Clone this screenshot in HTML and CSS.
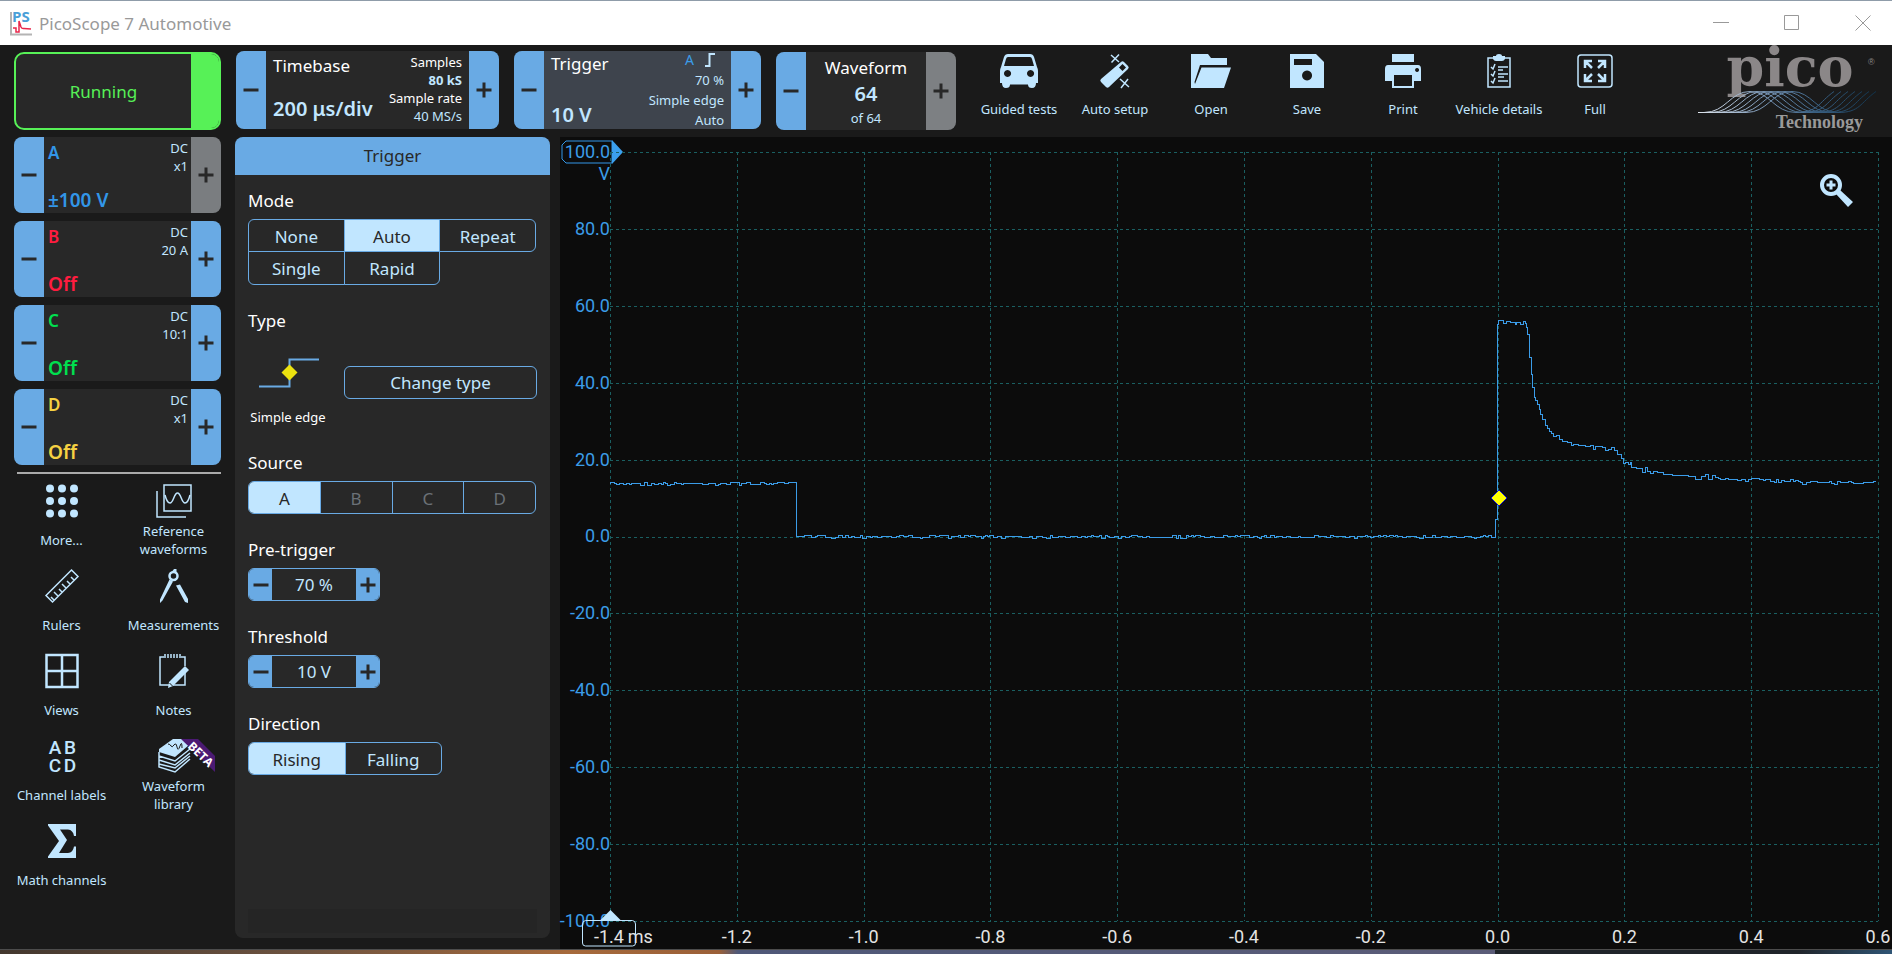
FILE: index.html
```html
<!DOCTYPE html>
<html lang="en">
<head>
<meta charset="utf-8">
<title>PicoScope 7 Automotive</title>
<link rel="stylesheet" href="styles.css">
</head>
<body>
<svg class="defs" aria-hidden="true">
  <symbol id="minus" viewBox="0 0 16 16"><path d="M0.500 6.500h15v3h-15z"/></symbol>
  <symbol id="plus" viewBox="0 0 16 16"><path d="M6.500 0.500h3v6h6v3h-6v6h-3v-6h-6v-3h6z"/></symbol>
</svg>
<div class="window">
  <header class="titlebar">
    <svg class="app-icon" viewBox="0 0 24 26" aria-hidden="true">
      <path d="M1 2v22.500h21" fill="none" stroke="#b4b4b4" stroke-width="2"/>
      <text class="app-icon-text" x="2" y="12">PS</text>
      <path d="M3 18h3v4h3v-11l2 6q1 2 3 1.500l7 .5" fill="none" stroke="#e8274b" stroke-width="1.500"/>
    </svg>
    <h1 class="title">PicoScope 7 Automotive</h1>
    <div class="window-buttons">
      <button aria-label="Minimize"><svg viewBox="0 0 16 16"><path d="M0 7.500h16"/></svg></button>
      <button aria-label="Maximize"><svg viewBox="0 0 16 16"><path d="M.5 .5h14v14h-14z"/></svg></button>
      <button aria-label="Close"><svg viewBox="0 0 16 16"><path d="M.5 .5l15 15M15.500 .5l-15 15"/></svg></button>
    </div>
  </header>

  <div class="app">
    <nav class="topbar">
      <button class="run"><span class="run-text">Running</span><span class="run-light"></span></button>
      <section class="card timebase">
        <button class="step" aria-label="Decrease timebase"><svg><use href="#minus"/></svg></button>
        <div class="card-body split">
          <div class="col"><span class="name">Timebase</span><strong class="value">200 μs/div</strong></div>
          <div class="col info"><span class="white">Samples</span><b>80 kS</b><span class="white">Sample rate</span><span>40 MS/s</span></div>
        </div>
        <button class="step" aria-label="Increase timebase"><svg><use href="#plus"/></svg></button>
      </section>
      <section class="card trigger active">
        <button class="step" aria-label="Decrease trigger level"><svg><use href="#minus"/></svg></button>
        <div class="card-body split">
          <div class="col"><span class="name">Trigger</span><strong class="value">10 V</strong></div>
          <div class="col info">
            <span class="edge"><span class="blue">A</span><svg class="edge-icon" viewBox="0 0 12 14"><path d="M1 13h4.500V1H11"/></svg></span>
            <span>70 %</span><span>Simple edge</span><span>Auto</span>
          </div>
        </div>
        <button class="step" aria-label="Increase trigger level"><svg><use href="#plus"/></svg></button>
      </section>
      <section class="card waveform">
        <button class="step" aria-label="Previous waveform"><svg><use href="#minus"/></svg></button>
        <div class="card-body center"><span class="name">Waveform</span><strong class="value">64</strong><span class="small">of 64</span></div>
        <button class="step" disabled aria-label="Next waveform"><svg><use href="#plus"/></svg></button>
      </section>
      <div class="actions">
        <button class="tool"><svg viewBox="0 0 40 34"><path fill-rule="evenodd" d="M9 0h22q3 0 4 3l3 10q1 2 1 4v12h-2q0 5-4 5t-4-3.500H11q0 3.500-4 3.500t-4-5H1V17q0-2 1-4L5 3q1-3 4-3zM9 3q-1.500 0-2 2L5 12h30l-2-7q-.5-2-2-2zM8.500 16a3.500 3.500 0 1 0 .1 0zM31.500 16a3.500 3.500 0 1 0 .1 0z"/></svg><span>Guided tests</span></button>
        <button class="tool"><svg viewBox="0 0 40 34"><path fill-rule="evenodd" d="M26 8q1.500-1.500 3 0l4 4q1.500 1.500 0 3L14 33q-1.500 1.500-3 0l-5-5q-1.500-1.500 0-3zM27.500 10l-3.500 3.500 3.500 3.500 3.500-3.500z"/><path class="line" d="M16 1l8 7M24 .5l-7.500 8M25 25l9 8M33 25l-7 9" /></svg><span>Auto setup</span></button>
        <button class="tool"><svg viewBox="0 0 40 34"><path d="M0 0h17l3 4h16v7H9L3.500 28 4 30 10.500 13.500H40L33 34H0z"/></svg><span>Open</span></button>
        <button class="tool"><svg viewBox="0 0 40 34"><path fill-rule="evenodd" d="M3 0h26l8 8v26H3zM7 5v6h18V5zM20 16.500a5 5 0 1 0 .1 0z"/></svg><span>Save</span></button>
        <button class="tool"><svg viewBox="0 0 40 34"><path fill-rule="evenodd" d="M9 0h22v8H9zM5 11h30q3 0 3 4v12h-7v7H9v-7H2V15q0-4 3-4zM11 21v11h18V21zM34 14a2 2 0 1 0 .1 0z"/></svg><span>Print</span></button>
        <button class="tool"><svg viewBox="0 0 40 34"><path d="M14 2h3q0-2 3-2t3 2h3v3q-1 2-3 2h-6q-2 0-3-2z"/><path class="line" d="M14 4H9v29h22V4h-5M19 13h10M19 16h5M19 20h10M19 23h6M19 27h10M12 13l2 2 2-5M12 20l2 2 2-5M12 27l2 2 2-5"/></svg><span>Vehicle details</span></button>
        <button class="tool"><svg viewBox="0 0 40 34"><rect class="line" x="3" y="1" width="34" height="32" rx="3"/><path class="thick" d="M10 14V7h7M10 7l7 7M30 14V7h-7M30 7l-7 7M10 20v7h7M10 27l7-7M30 20v7h-7M30 27l-7-7"/></svg><span>Full</span></button>
      </div>
      <svg class="logo" viewBox="0 0 180 80" role="img" aria-label="Pico Technology">
        <defs><linearGradient id="wave-fade" gradientUnits="userSpaceOnUse" x1="0" y1="0" x2="180" y2="0"><stop offset="0" stop-color="#dfe6ee"/><stop offset=".35" stop-color="#7d99b8"/><stop offset=".65" stop-color="#3c6488"/><stop offset="1" stop-color="#0e3048"/></linearGradient></defs>
        <text class="logo-name" x="92" y="35">pico</text>
        <text class="logo-mark" x="170" y="14">®</text>
        <g class="waves" id="waves"></g>
        <text class="logo-sub" x="165" y="77">Technology</text>
      </svg>
    </nav>

    <div class="work">
      <aside class="sidebar">
        <section class="card channel ch-a">
          <button class="step" aria-label="Decrease A range"><svg><use href="#minus"/></svg></button>
          <div class="card-body split"><div class="col"><b>A</b><strong>±100 V</strong></div><div class="meta"><span>DC</span><span>x1</span></div></div>
          <button class="step" disabled aria-label="Increase A range"><svg><use href="#plus"/></svg></button>
        </section>
        <section class="card channel ch-b">
          <button class="step" aria-label="Decrease B range"><svg><use href="#minus"/></svg></button>
          <div class="card-body split"><div class="col"><b>B</b><strong>Off</strong></div><div class="meta"><span>DC</span><span>20 A</span></div></div>
          <button class="step" aria-label="Increase B range"><svg><use href="#plus"/></svg></button>
        </section>
        <section class="card channel ch-c">
          <button class="step" aria-label="Decrease C range"><svg><use href="#minus"/></svg></button>
          <div class="card-body split"><div class="col"><b>C</b><strong>Off</strong></div><div class="meta"><span>DC</span><span>10:1</span></div></div>
          <button class="step" aria-label="Increase C range"><svg><use href="#plus"/></svg></button>
        </section>
        <section class="card channel ch-d">
          <button class="step" aria-label="Decrease D range"><svg><use href="#minus"/></svg></button>
          <div class="card-body split"><div class="col"><b>D</b><strong>Off</strong></div><div class="meta"><span>DC</span><span>x1</span></div></div>
          <button class="step" aria-label="Increase D range"><svg><use href="#plus"/></svg></button>
        </section>
        <hr class="divider">
        <div class="tools">
          <button class="tool"><svg viewBox="0 0 40 34"><g><circle cx="8" cy="4.500" r="4"/><circle cx="20" cy="4.500" r="4"/><circle cx="32" cy="4.500" r="4"/><circle cx="8" cy="17" r="4"/><circle cx="20" cy="17" r="4"/><circle cx="32" cy="17" r="4"/><circle cx="8" cy="29.500" r="4"/><circle cx="20" cy="29.500" r="4"/><circle cx="32" cy="29.500" r="4"/></g></svg><span>More...</span></button>
          <button class="tool"><svg viewBox="0 0 40 34"><path class="line" d="M10 1h27v26H10zM3 7v26h29"/><path class="line" d="M11 11q2 8 5 8c3.500 0 4-10 7.500-10s4 10 7.500 10q3 0 5-8"/></svg><span>Reference waveforms</span></button>
          <button class="tool"><svg viewBox="0 0 40 34"><path class="line" d="M29.500 1L36 7.500 10.500 33 4 26.500zM12 31l-3-3M16 27l-4-4M20 23l-3-3M24 19l-4-4M28 15l-3-3M32 11l-3-3"/></svg><span>Rulers</span></button>
          <button class="tool"><svg viewBox="0 0 40 34"><path d="M18.500 2l1.500-2h2.500v3l-1 1zM15.500 10.500L6 30.500V34l2.500-2.500 10.500-19zM22 16.500L31 33l3 1v-4l-8-14.500z"/><circle class="thick" cx="19.500" cy="7" r="4"/></svg><span>Measurements</span></button>
          <button class="tool"><svg viewBox="0 0 40 34"><path class="thick" d="M4.500 1h31v32h-31zM20 1v32M4.500 17h31"/></svg><span>Views</span></button>
          <button class="tool"><svg viewBox="0 0 40 34"><path class="line" d="M10 3H6v28h25V18M31 12V3h-4M11 0v4M14 0v4M17 0v4M20 0v4M23 0v4M26 0v4"/><path d="M31 12l4 4-16 16-5 2 1-6z"/><path d="M15.500 29l3 3" stroke="#1a1a1a"/></svg><span>Notes</span></button>
          <button class="tool"><svg class="letters" viewBox="0 0 40 34"><text x="13" y="15">A</text><text x="28" y="15">B</text><text x="13" y="33">C</text><text x="28" y="33">D</text></svg><span>Channel labels</span></button>
          <button class="tool">
            <span class="badge-icon"><svg viewBox="0 0 40 34"><path d="M19 0h12l4 6-14 12L5 13v-3z"/><path class="line" d="M5 13v15l16 5 15-13M5 17l16 5 15-12M5 21l16 5 15-12M5 25l16 4 15-12"/><path d="M14 5q2 0 3 2t3-1 3 2 3-1 2 2" fill="none" stroke="#1a1a1a"/></svg>
            <svg class="beta" viewBox="0 0 34 34"><path d="M0 0h17l17 17v16z" fill="#4b1a73"/><text transform="translate(19.500 15.500) rotate(44)" y="4">BETA</text></svg></span>
            <span>Waveform library</span></button>
          <button class="tool"><svg viewBox="0 0 40 34"><path d="M6 0h28v12h-2q-1-6-6-6.500H18L25 16 17 29h9q5-.5 6-6.500h2V34H6v-1.500L17 17 6 1.500z"/></svg><span>Math channels</span></button>
        </div>
      </aside>

      <section class="panel">
        <h2 class="panel-head">Trigger</h2>
        <div class="panel-body">
          <fieldset class="field">
            <legend>Mode</legend>
            <div class="seg mode">
              <label><input type="radio" name="mode"><span>None</span></label>
              <label><input type="radio" name="mode" checked><span>Auto</span></label>
              <label><input type="radio" name="mode"><span>Repeat</span></label>
              <label><input type="radio" name="mode"><span>Single</span></label>
              <label><input type="radio" name="mode"><span>Rapid</span></label>
            </div>
          </fieldset>
          <fieldset class="field type-field">
            <legend>Type</legend>
            <div class="type">
              <figure class="type-figure">
                <svg viewBox="0 0 60 32"><path d="M0 29.500h30.500V2.500H60" fill="none" stroke="#69aae4" stroke-width="2"/><path d="M30.500 7.500l8 8-8 8-8-8z" fill="#ece20f"/></svg>
                <figcaption>Simple edge</figcaption>
              </figure>
              <button class="outline">Change type</button>
            </div>
          </fieldset>
          <fieldset class="field">
            <legend>Source</legend>
            <div class="seg four">
              <label><input type="radio" name="src" checked><span>A</span></label>
              <label><input type="radio" name="src" disabled><span>B</span></label>
              <label><input type="radio" name="src" disabled><span>C</span></label>
              <label><input type="radio" name="src" disabled><span>D</span></label>
            </div>
          </fieldset>
          <div class="field">
            <label class="field-name" for="pre">Pre-trigger</label>
            <div class="spin"><button aria-label="Less"><svg><use href="#minus"/></svg></button><input id="pre" value="70 %"><button aria-label="More"><svg><use href="#plus"/></svg></button></div>
          </div>
          <div class="field">
            <label class="field-name" for="thr">Threshold</label>
            <div class="spin"><button aria-label="Less"><svg><use href="#minus"/></svg></button><input id="thr" value="10 V"><button aria-label="More"><svg><use href="#plus"/></svg></button></div>
          </div>
          <fieldset class="field">
            <legend>Direction</legend>
            <div class="seg two">
              <label><input type="radio" name="dir" checked><span>Rising</span></label>
              <label><input type="radio" name="dir"><span>Falling</span></label>
            </div>
          </fieldset>
          <div class="panel-foot"></div>
        </div>
      </section>

      <main class="chart">
        <div class="y-axis">
          <span class="tick">100.0</span><span class="tick">80.0</span><span class="tick">60.0</span><span class="tick">40.0</span><span class="tick">20.0</span><span class="tick">0.0</span><span class="tick">-20.0</span><span class="tick">-40.0</span><span class="tick">-60.0</span><span class="tick">-80.0</span><span class="tick">-100.0</span>
          <div class="y-handle"><svg viewBox="0 0 62 24"><path d="M51 1H5L1 5v14l4 4h46z" fill="none" stroke="#3296e8"/><path d="M51 0l11 12-11 12z" fill="#3ba0ef"/></svg><span>V</span></div>
        </div>
        <div class="plot">
          <svg class="plot-svg" viewBox="0 0 1268 769" preserveAspectRatio="none" aria-label="Channel A voltage over time">
            <g class="grid" id="grid"></g>
            <path class="trace" id="trace"/>
          </svg>
          <svg class="marker" viewBox="0 0 18 18"><path d="M9 1l8 8-8 8-8-8z" fill="#ff0" stroke="#0a0ad0"/></svg>
          <button class="zoom" aria-label="Zoom"><svg viewBox="0 0 34 34"><circle cx="11" cy="11" r="9" fill="none" stroke="#c1e6ff" stroke-width="4"/><path d="M9.500 6.500h3v3h3v3h-3v3h-3v-3h-3v-3h3zM16 20l4-4 13 12-5 5z"/></svg></button>
        </div>
        <div class="x-axis">
          <span class="tick first">-1.4&#8201;ms</span><span class="tick">-1.2</span><span class="tick">-1.0</span><span class="tick">-0.8</span><span class="tick">-0.6</span><span class="tick">-0.4</span><span class="tick">-0.2</span><span class="tick">0.0</span><span class="tick">0.2</span><span class="tick">0.4</span><span class="tick">0.6</span>
          <svg class="x-handle" viewBox="0 0 54 37"><path d="M.5 14q0-3 3-3.500h47q3 .5 3 3.500v19q0 3-3 3h-47q-3 0-3-3z" fill="none" stroke="#c1e6ff"/><path d="M28.500 0l11 11h-22z" fill="#c1e6ff"/></svg>
        </div>
      </main>
    </div>
  </div>
  <div class="desktop"></div>
</div>
<script src="script.js"></script>
</body>
</html>
```

FILE: styles.css
```css
* { box-sizing: border-box; }
:root {
  --blue: #69aae4;
  --pale: #c1e6ff;
  --dark: #1a1a1a;
  --card: #282828;
  --trace: #3b9ce8;
}
body { margin: 0; font-family: "Noto Sans", "Open Sans", sans-serif; font-size: 17px; color: var(--pale); }
button, input { font: inherit; color: inherit; border: 0; padding: 0; background: none; }
.defs { display: block; width: 0; height: 0; }
.window { display: flex; flex-direction: column; height: 100vh; border-top: 1px solid #8f9ca9; overflow: hidden; }

.titlebar { display: flex; align-items: center; height: 44px; flex: none; background: #fff; padding-left: 10px; }
.app-icon { width: 24px; height: 26px; overflow: visible; }
.app-icon-text { font: bold 15px "Open Sans", sans-serif; fill: #4a9fd8; }
.title { margin: 0 0 0 5px; font-size: 17px; font-weight: 400; color: #999; }
.window-buttons { display: flex; gap: 13px; margin-left: auto; }
.window-buttons button { width: 58px; height: 44px; display: grid; place-items: center; }
.window-buttons svg { width: 16px; height: 16px; fill: none; stroke: #999; }

.app { flex: 1; min-height: 0; display: flex; flex-direction: column; background: var(--dark); }
.topbar { display: flex; height: 92px; flex: none; padding: 6px 14px 7px; }
.run { display: flex; width: 207px; height: 78px; margin: 1px 15px 0 0; border: 2px solid #57f157; border-radius: 10px; background: var(--card); overflow: hidden; color: #57f157; }
.run-text { flex: 1; align-self: center; }
.run-light { width: 28px; height: 100%; background: #57f157; }

.card { display: flex; border-radius: 8px; overflow: hidden; background: var(--card); }
.card-body { flex: 1; min-width: 0; padding: 0 7px; display: flex; }
.split { justify-content: space-between; }
.col { display: flex; flex-direction: column; justify-content: space-between; white-space: nowrap; }
.step { width: 30px; flex: none; display: grid; place-items: center; background: var(--blue); }
.step:disabled { background: #7d8083; }
.step svg, .spin svg { width: 16px; height: 16px; fill: #282828; }
.name { color: #fff; line-height: 24px; }
.value { font-size: 20px; font-weight: 600; line-height: 28px; }
.timebase, .trigger, .waveform { height: 78px; margin-right: 15px; }
.timebase { width: 263px; }
.trigger { width: 247px; }
.waveform { width: 180px; margin-top: 1px; }
.active { background: #3e444d; }
.timebase .col:first-child { padding: 3px 0 6px; }
.trigger .col:first-child { padding: 1px 0 0; }
.info { align-items: flex-end; font-size: 13px; line-height: 18px; padding: 2px 0 4px; }
.trigger .info { padding: 0; }
.white { color: #fff; }
.blue { color: var(--trace); font-size: 14px; }
.edge { display: flex; gap: 10px; align-items: center; padding-right: 8px; }
.edge-icon { width: 12px; height: 14px; fill: none; stroke: var(--pale); stroke-width: 2; }
.center { flex-direction: column; align-items: center; padding-top: 4px; }
.small { font-size: 13px; line-height: 20px; }

.actions { display: flex; }
.tool { display: flex; flex-direction: column; align-items: center; font-size: 13px; line-height: 18px; }
.tool svg { width: 40px; height: 34px; flex: none; fill: var(--pale); overflow: visible; }
.tool .line, .tool .thick { fill: none; stroke: var(--pale); stroke-width: 1.5; }
.tool .thick { stroke-width: 2.5; }
.actions .tool { width: 96px; padding-top: 3px; gap: 12px; white-space: nowrap; }
.logo { width: 180px; height: 80px; margin-left: auto; overflow: visible; }
.logo-name { font: bold 54px "DejaVu Serif", serif; fill: #8b8788; text-anchor: middle; }
.logo-mark { font: 9px "Liberation Sans", sans-serif; fill: #8b8788; }
.logo-sub { font: bold 18px "Liberation Serif", serif; fill: #999; text-anchor: end; }
.waves { fill: none; stroke: url(#wave-fade); stroke-width: 1; }

.work { flex: 1; min-height: 0; display: flex; }
.sidebar { width: 235px; flex: none; padding-left: 14px; padding-right: 14px; }
.channel { height: 76px; margin-bottom: 8px; }
.channel .card-body { padding: 0 3px 0 4px; }
.channel .col { padding: 4px 0 0; }
.channel b { font-size: 17px; font-weight: 600; line-height: 24px; }
.channel strong { font-size: 19px; font-weight: 600; line-height: 25px; }
.channel .step:disabled { background: #7a7d80; }
.meta { display: flex; flex-direction: column; text-align: right; font-size: 13px; line-height: 18px; padding-top: 2px; }
.ch-a .col { color: #3296e8; }
.ch-b .col { color: #ff1c3f; }
.ch-c .col { color: #00e04f; }
.ch-d .col { color: #f5d142; }
.divider { margin: -1px 0 0 3px; border: 0; height: 2px; background: #aaa; }
.tools { display: grid; grid-template-columns: 111px 111px; grid-auto-rows: 85px; column-gap: 1px; margin: 10px -8px 0 -8px; }
.tools .tool { justify-self: center; width: 100px; }
.tools .tool > span:last-child { display: grid; place-items: center; height: 40px; padding-top: 3px; }
.letters text { font: 500 19px Roboto, sans-serif; text-anchor: middle; }
.badge-icon { position: relative; display: block; height: 34px; }
.tool .beta { position: absolute; left: 27px; top: 0; width: 34px; height: 34px; }
.beta text { font: bold 12px "Open Sans", sans-serif; fill: #fff; text-anchor: middle; }

.panel { width: 315px; flex: none; margin: 0 10px 11px 0; border-radius: 8px; overflow: hidden; background: var(--card); display: flex; flex-direction: column; }
.panel-head { margin: 0; flex: none; background: var(--blue); color: #282828; text-align: center; font-size: 17px; font-weight: 400; line-height: 38px; }
.panel-body { flex: 1; display: flex; flex-direction: column; padding: 14px 13px 5px; }
.field { margin: 0 0 24px; padding: 0; border: 0; min-width: 0; }
.field legend, .field-name { display: block; padding: 0; color: #fff; line-height: 24px; margin-bottom: 6px; }
.seg { display: grid; line-height: 33px; text-align: center; }
.seg label { position: relative; height: 33px; border: 1px solid var(--blue); margin-right: -1px; overflow: hidden; }
.seg input { position: absolute; inset: 0; margin: 0; opacity: 0; }
.seg span { display: block; height: 31px; line-height: 33px; }
.seg input:checked + span { background: var(--pale); color: #282828; }
.seg input:disabled + span { color: #6b7177; }
.mode, .four { width: 287px; }
.mode { grid-template-columns: repeat(3, 1fr); }
.mode label:nth-child(n+4) { margin-top: -1px; height: 34px; }
.four { grid-template-columns: repeat(4, 1fr); }
.two { width: 193px; grid-template-columns: 1fr 1fr; }
.seg label:first-child { border-radius: 6px 0 0 6px; }
.seg label:last-child { border-radius: 0 6px 6px 0; }
.mode label:first-child { border-radius: 6px 0 0 0; }
.mode label:nth-child(3) { border-radius: 0 6px 6px 0; }
.mode label:nth-child(4) { border-radius: 0 0 0 6px; }
.mode label:last-child { border-radius: 0 0 6px 0; }
.type { display: grid; grid-template-columns: 80px 1fr; column-gap: 16px; padding: 12px 0 0; }
.type-figure { margin: 0; text-align: center; font-size: 13px; white-space: nowrap; color: #fff; }
.type-figure svg { display: block; width: 60px; height: 32px; margin: 6px 0 18px 11px; }
.type-figure figcaption { line-height: 20px; }
.outline { height: 33px; border: 1px solid var(--blue); border-radius: 6px; margin-top: 15px; }
.type-field { margin: 0 0 24px; }
.spin { display: flex; width: 132px; height: 33px; border-radius: 6px; overflow: hidden; border: 1px solid var(--blue); }
.spin button { width: 23px; display: grid; place-items: center; background: var(--blue); }
.spin input { flex: 1; min-width: 0; text-align: center; }
.panel-foot { margin-top: auto; height: 24px; background: #252525; }

.chart { flex: 1; min-width: 0; display: grid; grid-template-columns: 50px 1fr 14px; grid-template-rows: 15px 1fr 28px; background: #0c0c0c; font-family: Roboto, sans-serif; font-size: 18px; }
.y-axis { grid-area: 2 / 1; position: relative; display: flex; flex-direction: column; justify-content: space-between; align-items: flex-end; color: var(--trace); white-space: nowrap; }
.y-axis .tick { height: 0; line-height: 0; }
.y-handle { position: absolute; right: -13px; top: -12px; width: 62px; }
.y-handle svg { display: block; width: 62px; height: 24px; }
.y-handle span { display: block; text-align: right; padding-right: 13px; line-height: 20px; }
.plot { grid-area: 2 / 2; position: relative; min-height: 0; }
.plot-svg { display: block; width: 100%; height: 100%; overflow: visible; }
.grid { stroke: #1a5f61; stroke-width: 1; stroke-dasharray: 3 3; shape-rendering: crispEdges; }
.trace { fill: none; stroke: var(--trace); stroke-width: 1; shape-rendering: crispEdges; }
.marker { position: absolute; left: 70%; top: 45%; width: 18px; height: 18px; margin: -9px 0 0 -8px; }
.zoom { position: absolute; right: 24px; top: 22px; width: 34px; height: 34px; }
.zoom svg { width: 34px; height: 34px; fill: var(--pale); }
.x-axis { grid-area: 3 / 2; position: relative; display: flex; justify-content: space-between; color: #e4e4e4; line-height: 31px; white-space: nowrap; }
.x-axis .tick { width: 0; display: flex; justify-content: center; }
.x-axis .first { justify-content: flex-start; margin-left: -16px; margin-right: 16px; }
.x-handle { position: absolute; left: -28px; top: -11px; width: 54px; height: 37px; }

.desktop { height: 5px; flex: none; border-top: 1px solid #4c4c4c; background: linear-gradient(90deg, #43372e 0, #6d5340 16%, #a66a3c 30%, #9b6038 38%, #4f5878 39%, #5b5c78 79%, #20242a 79%, #20242a 95%, #2f5575 100%); }
```

FILE: script.js
```js
const NS = "http://www.w3.org/2000/svg";
const WIDTH = 1268;
const HEIGHT = 769;

function add(parent, name, attrs) {
  const el = document.createElementNS(NS, name);
  for (const key in attrs) el.setAttribute(key, attrs[key]);
  parent.appendChild(el);
}

// Graticule: ten divisions each way
const grid = document.getElementById("grid");
for (let i = 0; i <= 10; i++) {
  const x = Math.round(WIDTH * i / 10) + 0.5;
  const y = Math.round(HEIGHT * i / 10) + 0.5;
  add(grid, "path", { d: `M${x} 0V${HEIGHT}` });
  add(grid, "path", { d: `M0 ${y}H${WIDTH}` });
}

// Sampled voltage, drawn as steps; flat stretches get one-count noise
let seed = 7;
const random = () => (seed = (seed * 16807) % 2147483647) / 2147483647;
let d = "M0 331.5";
function flat(from, to, level) {
  for (let x = from; x < to; x += 2 + Math.floor(random() * 3)) {
    const r = random();
    const y = level + (r < 0.25 ? -1 : r > 0.92 ? 2 : r > 0.7 ? 1 : 0);
    d += `H${x + 0.5}V${y + 0.5}`;
  }
}
flat(0, 186, 331);
d += "H186.5V384.5";
flat(188, 884, 384);
d += "H885.5V367H887.5V172";
const pulse = [[888, 168], [893, 171], [896, 169], [900, 170], [905, 172], [906, 170], [910, 172], [913, 169], [915, 171], [916, 175], [917, 182], [919, 205], [921, 222], [922, 235], [924, 245], [925, 248], [927, 252], [929, 257], [930, 262], [932, 267], [935, 273], [937, 276], [939, 279], [941, 281], [943, 284], [946, 283], [949, 287], [952, 289], [957, 290], [961, 293], [963, 292], [968, 293], [975, 294], [980, 293], [983, 297], [985, 294], [992, 295], [995, 298], [998, 297], [1001, 295], [1004, 298], [1007, 302], [1010, 302], [1011, 306], [1013, 311], [1015, 310], [1018, 312], [1020, 310], [1021, 315], [1026, 316], [1032, 320], [1035, 315], [1037, 319], [1040, 321], [1043, 319], [1047, 320], [1053, 322], [1062, 323], [1078, 324], [1085, 327], [1091, 324], [1095, 322], [1098, 327], [1102, 323], [1105, 325]];
for (const [x, y] of pulse) d += `H${x + 0.5}V${y + 0.5}`;
flat(1108, 1156, 327);
flat(1156, 1190, 328);
flat(1190, 1267, 330);
document.getElementById("trace").setAttribute("d", d);

// Overlapping wave lines of the logo
const waves = document.getElementById("waves");
for (let i = 0; i < 7; i++) {
  const s = i * 7;
  add(waves, "path", { d: `M0 61.500H${s + 6}C${s + 28} 61.500 ${s + 32} 40.500 ${s + 52} 40.500S${s + 76} 61.500 ${s + 98} 61.500S${s + 120} 52 ${s + 136} 40.500` });
}
```
